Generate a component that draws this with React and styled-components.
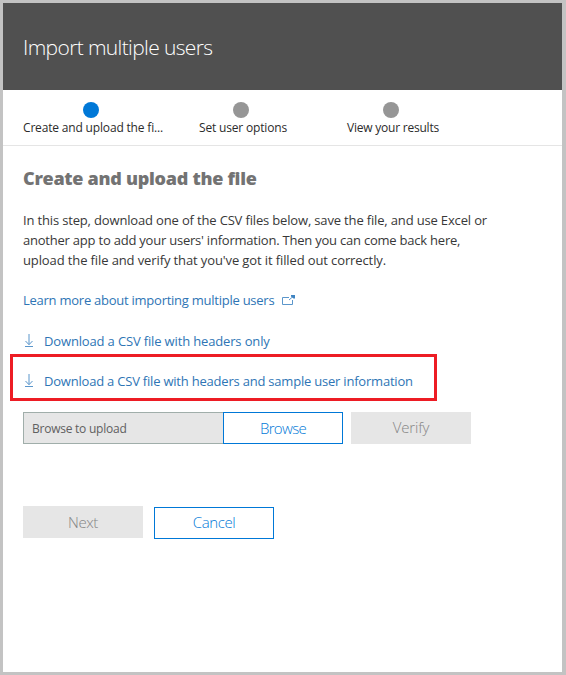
import React from 'react';
import styled, { createGlobalStyle } from 'styled-components';

const Global = createGlobalStyle`
  * { box-sizing: border-box; }
  body {
    margin: 0;
    background: #fff;
    font-family: 'Open Sans', 'Noto Sans', sans-serif;
    font-size: 13px;
    line-height: 20px;
    color: #383838;
  }
`;

const Panel = styled.main`
  display: flex;
  flex-direction: column;
  width: 566px;
  height: 675px;
  border: 3px solid #c3c3c3;
  border-right-width: 4px;
  background: #fff;
  overflow: hidden;
`;

const Header = styled.header`
  display: flex;
  align-items: center;
  height: 87px;
  padding: 1px 20px 0;
  background: #505050;
`;

const Title = styled.h1`
  margin: 0;
  font-size: 21px;
  font-weight: 300;
  line-height: 28px;
  letter-spacing: -0.63px;
  white-space: nowrap;
  color: #fff;
`;

const Steps = styled.ol`
  display: flex;
  gap: 10px;
  height: 56px;
  margin: 0;
  padding: 12px 20px 0;
  list-style: none;
  border-bottom: 1px solid #e5e5e5;
`;

const Step = styled.li`
  display: flex;
  flex-direction: column;
  align-items: center;
  gap: 2px;
  width: 140px;
`;

const Dot = styled.span`
  width: 16px;
  height: 16px;
  margin-right: 4px;
  border-radius: 50%;
  background: ${(p) => (p.$active ? '#0078d7' : '#969696')};
`;

const StepLabel = styled.span`
  font-size: 12px;
  line-height: 16px;
  letter-spacing: ${(p) => p.$track}px;
  white-space: nowrap;
  color: #2b2b2b;
`;

const Content = styled.section`
  display: flex;
  flex-direction: column;
  align-items: flex-start;
  padding: 20px 20px 0;
`;

const Heading = styled.h2`
  margin: 0 0 20px;
  font-size: 18px;
  font-weight: 800;
  line-height: 24px;
  letter-spacing: -0.28px;
  white-space: nowrap;
  color: #737373;
`;

const Intro = styled.p`
  display: flex;
  flex-direction: column;
  margin: 0 0 20px;
`;

const Line = styled.span`
  letter-spacing: ${(p) => p.$track}px;
  white-space: nowrap;
`;

const Link = styled.a`
  display: flex;
  align-items: center;
  height: 20px;
  letter-spacing: ${(p) => p.$track}px;
  white-space: nowrap;
  color: #2e75b5;
  text-decoration: none;
`;

const Downloads = styled.div`
  position: relative;
  display: flex;
  flex-direction: column;
  gap: 20px;
  margin: 21px 0;
`;

const Highlight = styled.div`
  position: absolute;
  top: 23px;
  left: -13px;
  width: 427px;
  height: 47px;
  border: 3px solid #ed1c24;
  pointer-events: none;
`;

const ArrowIcon = styled.svg`
  width: 12px;
  height: 16px;
  margin-right: 9px;
`;

const PopOutIcon = styled.svg`
  width: 14px;
  height: 12px;
  margin-left: 7px;
`;

const Row = styled.div`
  display: flex;
  margin-bottom: ${(p) => p.$below || 0}px;
`;

const FileField = styled.div`
  width: 200px;
  height: 32px;
  padding: 1px 8px 0;
  border: 1px solid #a0aeaa;
  border-right-width: 0;
  background: #e6e6e6;
  font-size: 12px;
  line-height: 30px;
  letter-spacing: -0.24px;
  color: #606060;
`;

const Button = styled.button`
  width: 120px;
  height: 32px;
  padding: 0 0 ${(p) => p.$lift || 0}px;
  margin: ${(p) => p.$drop || 0}px 0 0 ${(p) => p.$left || 0}px;
  border: 1px solid ${(p) => (p.disabled ? '#e6e6e6' : '#0078d7')};
  background: ${(p) => (p.disabled ? '#e6e6e6' : '#fff')};
  color: ${(p) => (p.disabled ? '#858585' : '#0078d7')};
  font-family: inherit;
  font-size: 15px;
  font-weight: 350;
  line-height: ${(p) => 30 - (p.$lift || 0)}px;
  letter-spacing: ${(p) => p.$track}px;
`;

const DownloadArrow = () => (
  <ArrowIcon viewBox="0 0 12 16" fill="none" stroke="#5b96cb">
    <path d="M6 1v10.5M2.5 8l3.5 3.7L9.5 8" />
    <path d="M2 13.5h8" />
  </ArrowIcon>
);

const PopOut = () => (
  <PopOutIcon viewBox="0 0 14 12" fill="none" stroke="#5b96cb">
    <path d="M8 3.5H1.5v7h10V6" />
    <path d="M8 6l4-3.5" />
    <path d="M10 1h4v3.5h-1.5L10 2.5z" fill="#3f84c2" stroke="none" />
  </PopOutIcon>
);

const steps = [
  { label: 'Create and upload the fi...', track: -0.17, active: true },
  { label: 'Set user options', track: -0.17 },
  { label: 'View your results', track: -0.22 },
];

export default function App() {
  return (
    <Panel>
      <Global />
      <Header>
        <Title>Import multiple users</Title>
      </Header>
      <Steps>
        {steps.map((s) => (
          <Step key={s.label}>
            <Dot $active={s.active} />
            <StepLabel $track={s.track}>{s.label}</StepLabel>
          </Step>
        ))}
      </Steps>
      <Content>
        <Heading>Create and upload the file</Heading>
        <Intro>
          <Line $track={-0.16}>In this step, download one of the CSV files below, save the file, and use Excel or</Line>
          <Line $track={-0.22}>another app to add your users' information. Then you can come back here,</Line>
          <Line $track={-0.115}>upload the file and verify that you've got it filled out correctly.</Line>
        </Intro>
        <Link href="#" $track={-0.25}>
          Learn more about importing multiple users
          <PopOut />
        </Link>
        <Downloads>
          <Link href="#" $track={-0.15}>
            <DownloadArrow />
            Download a CSV file with headers only
          </Link>
          <Link href="#" $track={-0.21}>
            <DownloadArrow />
            Download a CSV file with headers and sample user information
          </Link>
          <Highlight />
        </Downloads>
        <Row $below={62}>
          <FileField>Browse to upload</FileField>
          <Button $track={-0.65}>Browse</Button>
          <Button disabled $left={8} $lift={2} $track={-0.15}>Verify</Button>
        </Row>
        <Row>
          <Button disabled $track={-0.4}>Next</Button>
          <Button $left={11} $drop={1} $lift={2} $track={-0.4}>Cancel</Button>
        </Row>
      </Content>
    </Panel>
  );
}
